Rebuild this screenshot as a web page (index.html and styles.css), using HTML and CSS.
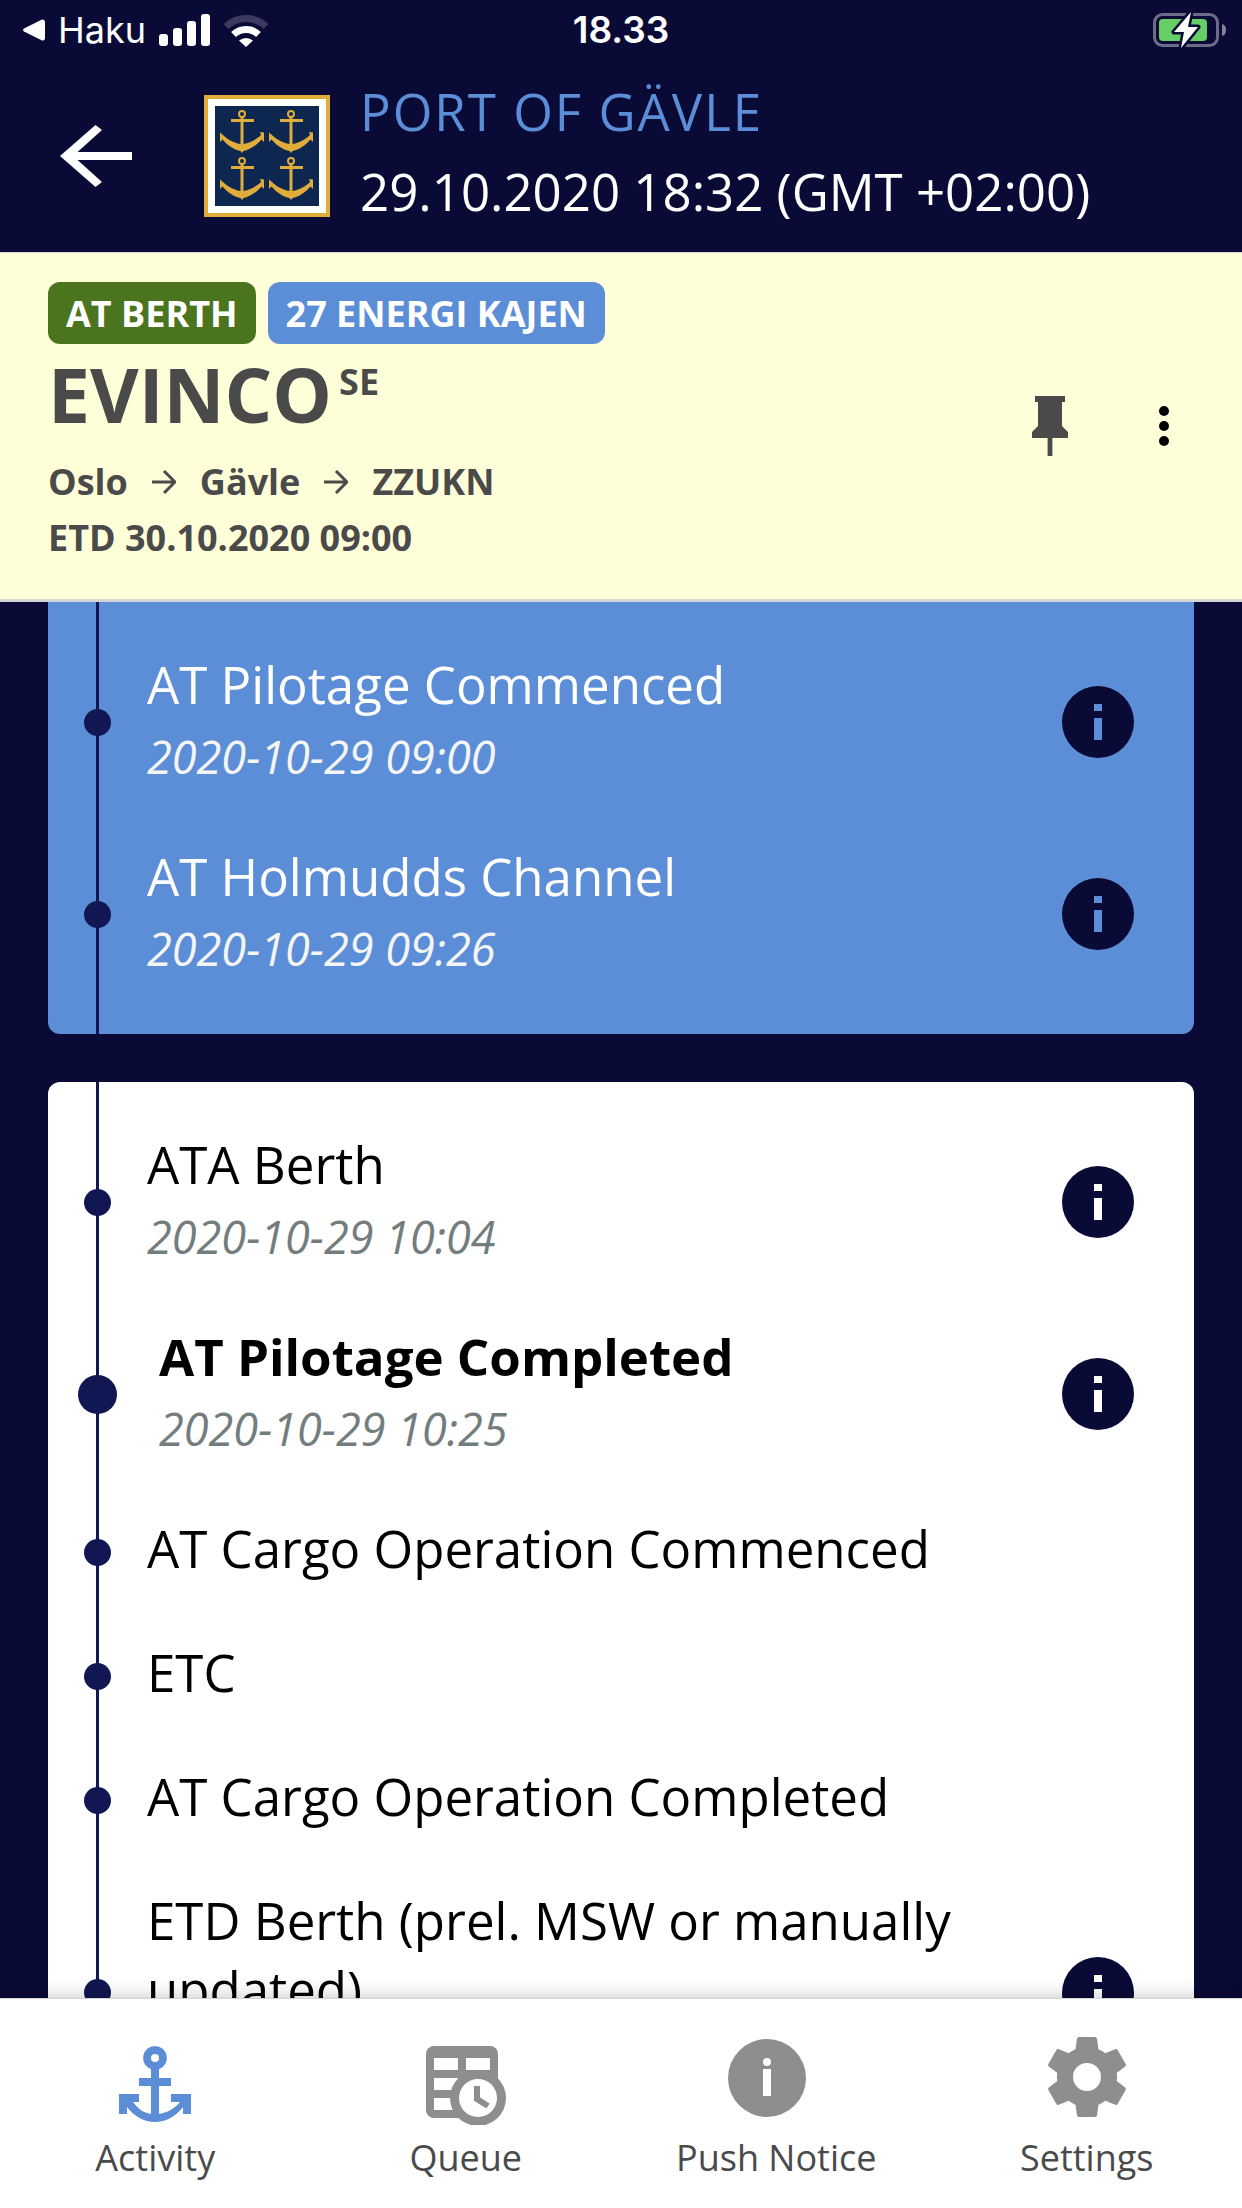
FILE: index.html
```html
<!DOCTYPE html>
<html lang="en">
<head>
<meta charset="utf-8">
<meta name="viewport" content="width=device-width, initial-scale=1">
<title>Port of Gävle – EVINCO</title>
<link rel="stylesheet" href="styles.css">
</head>
<body>
<svg width="0" height="0" class="defs" aria-hidden="true">
  <defs>
    <g id="crest-anchor">
      <circle cx="22" cy="4" r="3" fill="none" stroke="#e0ac3a" stroke-width="2"/>
      <path fill="#e0ac3a" d="M20.500 7h3v2H34v3H23.500v22C31 33 38 28 41 25L40 22 44 22.500V32L41.500 29.500C36 36 29 40 23.500 41L22 43 20.500 41C15 40 8 36 2.500 29.500L0 32V22.500L3 25C6 28 13 33 20.500 34V12H11V9h9.500z"/>
    </g>
    <symbol id="info" viewBox="0 0 72 72">
      <path fill-rule="evenodd" d="M36 0a36 36 0 1 1 0 72 36 36 0 0 1 0-72zM32 18h8v7h-8zM32 32h8v22h-8z"/>
    </symbol>
    <symbol id="arrow" viewBox="0 0 24 24">
      <path d="M0 12h22M12 1l11 11-11 11" fill="none" stroke="#4a4a4a" stroke-width="3"/>
    </symbol>
  </defs>
</svg>

<header class="header">
  <div class="status">
    <div class="status-left">
      <svg width="22" height="22" viewBox="0 0 22 22" aria-hidden="true"><path fill="#fff" d="M1 9.500L19 .5Q22 0 22 3v16q0 3-3 2.500L1 12.500q-2-1.500 0-3z"/></svg>
      <span>Haku</span>
      <svg class="signal" width="51" height="32" viewBox="0 0 51 32" fill="#fff" aria-hidden="true"><rect y="20" width="9" height="12" rx="3"/><rect x="14" y="14" width="9" height="18" rx="3"/><rect x="28" y="7" width="9" height="25" rx="3"/><rect x="42" width="9" height="32" rx="3"/></svg>
      <svg width="46" height="33" viewBox="0 0 46 33" aria-hidden="true"><path d="M3 12.500A29 29 0 0 1 43 12.500" fill="none" stroke="#3a3b5e" stroke-width="7"/><path d="M10.500 20.500A18 18 0 0 1 35.500 20.500" fill="none" stroke="#fff" stroke-width="7"/><path d="M16 26.500a11 11 0 0 1 14 0l-7 6.500z" fill="#fff"/></svg>
    </div>
    <span class="clock">18.33</span>
    <div class="status-right">
      <svg width="73" height="36" viewBox="0 0 73 36" aria-hidden="true">
        <rect x="1.500" y="2.500" width="63" height="31" rx="8" fill="none" stroke="#6b6c86" stroke-width="3"/>
        <path d="M69 12q4 1 4 6t-4 6z" fill="#84859a"/>
        <rect x="6" y="7" width="48" height="22" rx="4" fill="#65ce65"/>
        <path d="M38 0L21 20h10l-3 16L45 15H35z" fill="#fff" stroke="#090a36" stroke-width="5" stroke-linejoin="round" paint-order="stroke"/>
      </svg>
    </div>
  </div>
  <div class="port">
    <button class="back" type="button" aria-label="Back">
      <svg width="72" height="62" viewBox="0 0 72 62"><path fill="#fff" d="M0 31L35.500 0 42 5 17.500 27H72v8H17.500L42 57l-6.500 5z"/></svg>
    </button>
    <svg class="crest" width="126" height="122" viewBox="0 0 126 122" role="img" aria-label="Port of Gävle">
      <path fill="#e0ac3a" d="M0 0h126v122H0z"/><path fill="#fff" d="M4 4h118v114H4z"/><path fill="#0d2751" d="M11 11h104v100H11z"/>
      <use href="#crest-anchor" x="16" y="15"/><use href="#crest-anchor" x="65" y="15"/>
      <use href="#crest-anchor" x="16" y="62"/><use href="#crest-anchor" x="65" y="62"/>
    </svg>
    <div class="port-text">
      <h1 class="port-name">PORT OF GÄVLE</h1>
      <p class="port-time">29.10.2020 18:32 (GMT +02:00)</p>
    </div>
  </div>
</header>

<section class="vessel">
  <div class="vessel-main">
    <div class="badges">
      <span class="badge badge-green">AT BERTH</span>
      <span class="badge badge-blue">27 ENERGI KAJEN</span>
    </div>
    <h2 class="vessel-name">EVINCO<span class="flag">SE</span></h2>
    <p class="route"><span>Oslo</span><svg width="24" height="24"><use href="#arrow"/></svg><span>Gävle</span><svg width="24" height="24"><use href="#arrow"/></svg><span>ZZUKN</span></p>
    <p class="etd">ETD 30.10.2020 09:00</p>
  </div>
  <div class="vessel-actions">
    <button type="button" aria-label="Pin"><svg width="72" height="72" viewBox="0 0 24 24"><path fill="#4a4a4a" d="M16 12V4h1V2H7v2h1v8l-2 2v2h5.200v6h1.600v-6H18v-2z"/></svg></button>
    <button type="button" aria-label="More"><svg width="60" height="60" viewBox="0 0 24 24"><circle cx="12" cy="6" r="2"/><circle cx="12" cy="12" r="2"/><circle cx="12" cy="18" r="2"/></svg></button>
  </div>
</section>

<main class="timeline">
  <ol class="card card-sea">
    <li class="event"><span class="dot"></span><div class="event-text"><h3>AT Pilotage Commenced</h3><time>2020-10-29 09:00</time></div><button class="info" type="button" aria-label="Details"><svg width="72" height="72"><use href="#info"/></svg></button></li>
    <li class="event"><span class="dot"></span><div class="event-text"><h3>AT Holmudds Channel</h3><time>2020-10-29 09:26</time></div><button class="info" type="button" aria-label="Details"><svg width="72" height="72"><use href="#info"/></svg></button></li>
  </ol>
  <ol class="card card-berth">
    <li class="event"><span class="dot"></span><div class="event-text"><h3>ATA Berth</h3><time>2020-10-29 10:04</time></div><button class="info" type="button" aria-label="Details"><svg width="72" height="72"><use href="#info"/></svg></button></li>
    <li class="event current"><span class="dot"></span><div class="event-text"><h3>AT Pilotage Completed</h3><time>2020-10-29 10:25</time></div><button class="info" type="button" aria-label="Details"><svg width="72" height="72"><use href="#info"/></svg></button></li>
    <li class="event"><span class="dot"></span><div class="event-text"><h3>AT Cargo Operation Commenced</h3></div></li>
    <li class="event"><span class="dot"></span><div class="event-text"><h3>ETC</h3></div></li>
    <li class="event"><span class="dot"></span><div class="event-text"><h3>AT Cargo Operation Completed</h3></div></li>
    <li class="event event-tall"><span class="dot"></span><div class="event-text"><h3>ETD Berth (prel. MSW or manually updated)</h3></div><button class="info" type="button" aria-label="Details"><svg width="72" height="72"><use href="#info"/></svg></button></li>
  </ol>
</main>

<nav class="tabs">
  <a href="#activity" aria-current="page"><svg width="96" height="96" viewBox="-12 -17 96 96"><path fill="#5c8ed7" fill-rule="evenodd" d="M36 0a12 12 0 0 1 4 23.300V32h12v8H40v28c9-1.500 16-6 21-12h-9v-8h20v20h-8v-7C57 70 47 76 36 76S15 70 8 61v7H0V48h20v8h-6c5 6 9 10.500 18 12V40H20v-8h12v-8.700A12 12 0 0 1 36 0zm0 8a4 4 0 1 0 0 8 4 4 0 0 0 0-8z"/></svg><span>Activity</span></a>
  <a href="#queue"><svg width="96" height="96" viewBox="-8 -17 96 96"><rect width="72" height="72" rx="8" fill="#8e8e8e"/><path fill="#fff" d="M8 12h24v12H8zM40 12h24v12H40zM8 32h24v12H8zM8 52h24v12H8z"/><circle cx="52" cy="52" r="28" fill="#8e8e8e"/><circle cx="52" cy="52" r="19" fill="#fff"/><path d="M51 40v13l11 7" fill="none" stroke="#8e8e8e" stroke-width="6"/></svg><span>Queue</span></a>
  <a href="#push-notice"><svg width="96" height="96" viewBox="0 0 96 96"><circle cx="39" cy="49" r="39" fill="#8e8e8e"/><circle cx="39" cy="33" r="4" fill="#fff"/><path fill="#fff" d="M35 40h8v27h-8z"/></svg><span>Push Notice</span></a>
  <a href="#settings"><svg width="96" height="96" viewBox="0 0 24 24"><path fill="#8e8e8e" d="M12 15.500A3.500 3.500 0 0 1 8.500 12 3.500 3.500 0 0 1 12 8.500 3.500 3.500 0 0 1 15.500 12 3.500 3.500 0 0 1 12 15.500M19.430 12.970C19.470 12.650 19.500 12.330 19.500 12S19.470 11.340 19.430 11L21.540 9.370C21.730 9.220 21.780 8.950 21.660 8.730L19.660 5.270C19.540 5.050 19.270 4.960 19.050 5.050L16.560 6.050C16.040 5.660 15.500 5.320 14.870 5.070L14.500 2.420C14.460 2.180 14.250 2 14 2H10C9.750 2 9.540 2.180 9.500 2.420L9.130 5.070C8.500 5.320 7.960 5.660 7.440 6.050L4.950 5.050C4.730 4.960 4.460 5.050 4.340 5.270L2.340 8.730C2.210 8.950 2.270 9.220 2.460 9.370L4.570 11C4.530 11.340 4.500 11.670 4.500 12S4.530 12.650 4.570 12.970L2.460 14.630C2.270 14.780 2.210 15.050 2.340 15.270L4.340 18.730C4.460 18.950 4.730 19.030 4.950 18.950L7.440 17.940C7.960 18.340 8.500 18.680 9.130 18.930L9.500 21.580C9.540 21.820 9.750 22 10 22H14C14.250 22 14.460 21.820 14.500 21.580L14.870 18.930C15.500 18.670 16.040 18.340 16.560 17.940L19.050 18.950C19.270 19.030 19.540 18.950 19.660 18.730L21.660 15.270C21.780 15.050 21.730 14.780 21.540 14.630L19.430 12.970Z"/></svg><span>Settings</span></a>
</nav>
</body>
</html>
```
FILE: styles.css
```css
* { box-sizing: border-box; margin: 0; padding: 0; }
svg { display: block; flex: none; }
.defs { position: absolute; }
button { background: none; border: 0; cursor: pointer; }

body {
  display: flex;
  flex-direction: column;
  height: 100vh;
  overflow: hidden;
  background: #090a36;
  color: #000;
  font-family: "Open Sans", "Noto Sans", sans-serif;
}

/* Status bar and port header */
.header { flex: none; background: #090a36; color: #fff; }
.status {
  display: grid;
  grid-template-columns: 1fr auto 1fr;
  align-items: center;
  height: 60px;
  padding: 0 16px;
  font: 400 36px/60px Inter, sans-serif;
}
.status-left { display: flex; align-items: center; gap: 13px; padding-left: 7px; }
.clock { font-size: 37px; font-weight: 600; }
.status-right { display: flex; justify-content: flex-end; }
.port { display: flex; align-items: center; height: 192px; padding-left: 60px; }
.crest { margin: 0 30px 0 72px; }
.port-text { padding-bottom: 10px; }
.port-name { color: #5c8ed7; font-size: 51px; font-weight: 400; line-height: 80px; letter-spacing: 2px; }
.port-time { font-size: 51px; line-height: 80px; }

/* Vessel summary */
.vessel {
  flex: none;
  display: flex;
  justify-content: space-between;
  align-items: center;
  padding: 29px 48px 33px;
  border-top: 1px solid #d5d5d5;
  border-bottom: 3px solid #d5d5d5;
  background: #feffd8;
  color: #4a4a4a;
  font-size: 36px;
  font-weight: 700;
  line-height: 56px;
}
.badges { display: flex; gap: 12px; }
.badge { padding: 2px 18px 0; border-radius: 12px; color: #fff; line-height: 60px; }
.badge-green { background: #4b741f; }
.badge-blue { background: #5c8ed7; }
.vessel-name { display: flex; gap: 7px; font-size: 75px; line-height: 100px; padding-bottom: 10px; }
.flag { font-size: 36px; line-height: 76px; }
.route { display: flex; align-items: center; gap: 24px; }
.vessel-actions { display: flex; align-items: center; gap: 48px; padding-top: 4px; }

/* Timeline */
.timeline { flex: 1; min-height: 0; overflow: hidden; padding: 0 48px; }
.card {
  list-style: none;
  padding: 24px 0;
  border-radius: 12px;
  background: linear-gradient(#111752, #111752) 48px 0 / 3px 100% no-repeat #fff;
}
.card-sea { margin-bottom: 48px; border-radius: 0 0 12px 12px; background-color: #5c8ed7; color: #fff; }
.event { display: grid; grid-template-columns: 99px 1fr 72px; align-items: center; padding-right: 60px; }
.dot { justify-self: center; width: 27px; height: 27px; border-radius: 50%; background: #111752; }
.event-text { padding: 24px 24px 31px 0; }
.event h3 { font-size: 51px; font-weight: 400; line-height: 69px; }
.event time { display: block; margin-top: 8px; color: #747d7d; font-size: 45px; font-style: italic; line-height: 60px; }
.card-sea time { color: #f5f5f5; }
.info svg { fill: #090a36; }
.event-tall .event-text { align-self: start; }
.event-tall { min-height: 261px; }
.current .dot { width: 39px; height: 39px; }
.current .event-text { padding-left: 12px; }
.current h3 { font-weight: 700; }

/* Bottom tabs */
.tabs {
  flex: none;
  position: relative;
  display: grid;
  grid-template-columns: repeat(4, 1fr);
  padding: 30px 0 26px;
  border-top: 1px solid #d5d5d5;
  background: #fff;
  box-shadow: 0 0 18px rgba(0, 0, 0, .25);
}
.tabs a { display: flex; flex-direction: column; align-items: center; gap: 9px; color: #4a4a4a; font-size: 36px; line-height: 48px; text-decoration: none; }
```
